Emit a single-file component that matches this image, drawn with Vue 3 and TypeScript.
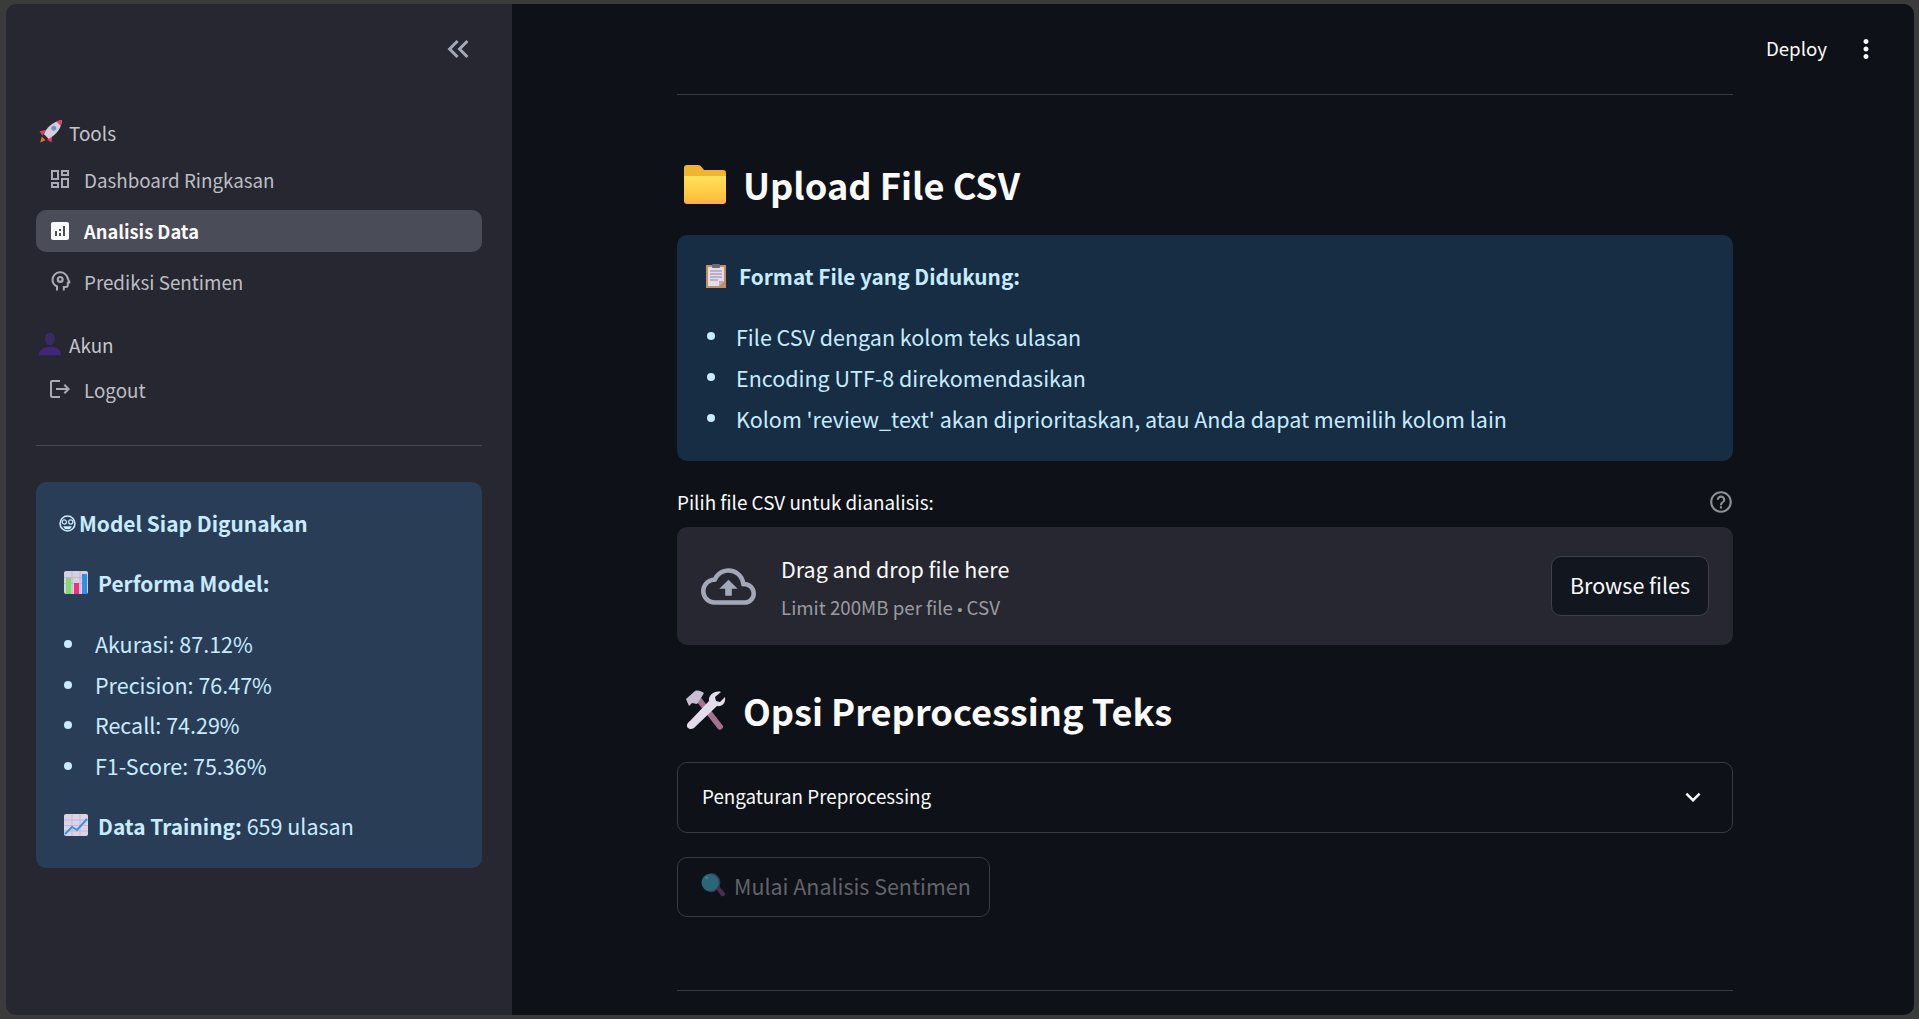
<script setup lang="ts">
const metrics = ['Akurasi: 87.12%', 'Precision: 76.47%', 'Recall: 74.29%', 'F1-Score: 75.36%'];
const formats = [
  'File CSV dengan kolom teks ulasan',
  'Encoding UTF-8 direkomendasikan',
  "Kolom 'review_text' akan diprioritaskan, atau Anda dapat memilih kolom lain",
];
</script>

<template>
  <div class="window">
    <aside class="sidebar">
      <div class="collapse-row">
        <svg class="collapse" viewBox="0 0 24 24"><path d="M17.59 18L19 16.59 14.42 12 19 7.41 17.59 6l-6 6zM11 18l1.41-1.41L7.83 12l4.58-4.59L11 6l-6 6z" /></svg>
      </div>

      <nav class="nav">
        <div class="nav-title">
          <svg class="nav-emoji" viewBox="0 0 32 32">
            <path d="M3 30l2-8 5 5z" fill="#d9772e" />
            <path d="M11 13l-9 2 4 6z M19 21l-1 9-6-4z" fill="#e8386e" />
            <path d="M8 19C11 10 20 2 32 0c-1 12-8 20-18 25z" fill="#d5cfdc" />
            <path d="M24 1.500L32 0l-1.500 8z" fill="#e8386e" />
            <circle cx="21" cy="11" r="3" fill="#4a9be0" stroke="#9a93a5" />
          </svg>
          <span>Tools</span>
        </div>
        <a class="nav-link">
          <svg viewBox="0 0 24 24"><path d="M19 5v2h-4V5h4M9 5v6H5V5h4m10 8v6h-4v-6h4M9 17v2H5v-2h4M21 3h-8v6h8V3zM11 3H3v10h8V3zm10 8h-8v10h8V11zm-10 4H3v6h8v-6z" /></svg>
          <span>Dashboard Ringkasan</span>
        </a>
        <a class="nav-link active">
          <svg viewBox="0 0 24 24"><path d="M19 3H5c-1.100 0-2 .9-2 2v14c0 1.100.9 2 2 2h14c1.100 0 2-.9 2-2V5c0-1.100-.9-2-2-2zM9 17H7v-5h2v5zm4 0h-2v-3h2v3zm0-5h-2v-2h2v2zm4 5h-2V7h2v10z" fill-rule="evenodd" /></svg>
          <span>Analisis Data</span>
        </a>
        <a class="nav-link">
          <svg viewBox="0 0 24 24">
            <path d="M9 21.500v-4C6.300 16.200 4.500 13.800 4.500 10.800a7.700 7.700 0 0 1 15.300-1l1.600 3.200c.2.400 0 .8-.5.8h-1.100v2.200a2 2 0 0 1-2 2h-2v3.500" fill="none" stroke="currentColor" stroke-width="2" />
            <circle cx="12.200" cy="10.400" r="2.400" fill="none" stroke="currentColor" stroke-width="2.200" />
          </svg>
          <span>Prediksi Sentimen</span>
        </a>
        <div class="nav-title second">
          <svg class="nav-emoji" viewBox="0 0 32 32">
            <path d="M16 1c4.500 0 6.500 3.500 6.500 8s-2.500 9-6.500 9-6.500-4.500-6.500-9 2-8 6.500-8z" fill="#3a2b62" />
            <path d="M1 31c0-7 6-10 11-11h8c5 1 11 4 11 11z" fill="#40277c" />
          </svg>
          <span>Akun</span>
        </div>
        <a class="nav-link logout">
          <svg viewBox="0 0 24 24"><path d="M17 7l-1.410 1.410L18.170 11H8v2h10.170l-2.580 2.580L17 17l5-5zM4 5h8V3H4c-1.100 0-2 .9-2 2v14c0 1.100.9 2 2 2h8v-2H4V5z" /></svg>
          <span>Logout</span>
        </a>
      </nav>

      <hr class="side-rule" />

      <section class="model-card">
        <p class="model-title">
          <svg class="tiny-face" viewBox="0 0 16 16">
            <circle cx="8" cy="8" r="7" fill="none" stroke="currentColor" stroke-width="1.500" />
            <circle cx="5" cy="6.500" r="2" fill="none" stroke="currentColor" stroke-width="1.200" />
            <circle cx="11" cy="6.500" r="2" fill="none" stroke="currentColor" stroke-width="1.200" />
            <path d="M4 10.500h8c-.5 2-2 3-4 3s-3.500-1-4-3z" fill="currentColor" />
          </svg>
          <span>Model Siap Digunakan</span>
        </p>
        <p class="model-heading">
          <svg class="emoji" viewBox="0 0 24 24">
            <rect width="24" height="23" rx="2" fill="#d8cfe2" />
            <path d="M0 6.500h24M0 12.500h24M8 0v23M16 0v23" stroke="#b5aec4" stroke-width=".7" />
            <rect x="2" y="7" width="5" height="16" fill="#7ddc6a" />
            <rect x="10" y="12" width="5" height="11" fill="#f0327a" />
            <rect x="18" y="3" width="5" height="20" fill="#2f8fe8" />
          </svg>
          <strong>Performa Model:</strong>
        </p>
        <ul class="bullets model-list">
          <li v-for="m in metrics" :key="m">{{ m }}</li>
        </ul>
        <p class="model-heading training">
          <svg class="emoji" viewBox="0 0 24 24">
            <rect width="24" height="22" rx="2" fill="#ddd2e6" />
            <path d="M0 6h24M0 11.500h24M0 17h24M8 0v22M16 0v22" stroke="#b9b0c8" stroke-width=".7" />
            <path d="M1 20l7-7 5 3 10-11" fill="none" stroke="#3a93e0" stroke-width="2" />
          </svg>
          <strong>Data Training:</strong>&nbsp;659 ulasan
        </p>
      </section>
    </aside>

    <main class="main">
      <div class="toolbar">
        <span class="deploy">Deploy</span>
        <svg class="kebab" viewBox="0 0 24 24"><path d="M12 8c1.100 0 2-.9 2-2s-.9-2-2-2-2 .9-2 2 .9 2 2 2zm0 2c-1.100 0-2 .9-2 2s.9 2 2 2 2-.9 2-2-.9-2-2-2zm0 6c-1.100 0-2 .9-2 2s.9 2 2 2 2-.9 2-2-.9-2-2-2z" /></svg>
      </div>

      <div class="content">
        <hr class="rule first" />

        <h2 class="heading upload">
          <svg class="head-emoji" viewBox="0 0 42 40">
            <path d="M0 4a3 3 0 0 1 3-3h11c2 0 3 1 4.500 3L20 6h19a3 3 0 0 1 3 3v6H0z" fill="#f0b432" />
            <path d="M0 12h42v25a3 3 0 0 1-3 3H3a3 3 0 0 1-3-3z" fill="url(#folderFill)" />
            <defs>
              <linearGradient id="folderFill" x1="0" y1="0" x2="0" y2="1">
                <stop offset="0" stop-color="#ffe05a" />
                <stop offset=".8" stop-color="#ffc33d" />
                <stop offset="1" stop-color="#f9a75e" />
              </linearGradient>
            </defs>
          </svg>
          <span>Upload File CSV</span>
        </h2>

        <section class="info">
          <p class="info-title">
            <svg class="info-emoji" viewBox="0 0 20 24">
              <rect y="1" width="20" height="23" fill="#c68d5f" />
              <path d="M2 3h16v14l-5 5H2z" fill="#e4dcec" />
              <path d="M13 22l5-5h-5z" fill="#b9a9c4" />
              <path d="M4 7h12M4 10h12M4 13h12M4 16h8" stroke="#8d8899" />
              <rect x="6" y="0" width="8" height="4" rx="1" fill="#6d6a78" />
            </svg>
            <strong>Format File yang Didukung:</strong>
          </p>
          <ul class="bullets info-list">
            <li v-for="f in formats" :key="f">{{ f }}</li>
          </ul>
        </section>

        <div class="label-row">
          <label>Pilih file CSV untuk dianalisis:</label>
          <svg class="help" viewBox="0 0 24 24"><path d="M11 18h2v-2h-2v2zm1-16C6.480 2 2 6.480 2 12s4.480 10 10 10 10-4.480 10-10S17.520 2 12 2zm0 18c-4.410 0-8-3.590-8-8s3.590-8 8-8 8 3.590 8 8-3.590 8-8 8zm0-14c-2.210 0-4 1.790-4 4h2c0-1.100.9-2 2-2s2 .9 2 2c0 2-3 1.750-3 5h2c0-2.250 3-2.500 3-5 0-2.210-1.790-4-4-4z" /></svg>
        </div>

        <div class="dropzone">
          <svg class="cloud" viewBox="0 0 24 24"><path d="M19.350 10.040C18.670 6.590 15.640 4 12 4 9.110 4 6.600 5.640 5.350 8.040 2.340 8.360 0 10.910 0 14c0 3.310 2.690 6 6 6h13c2.760 0 5-2.240 5-5 0-2.640-2.050-4.780-4.650-4.960zM19 18H6c-2.210 0-4-1.790-4-4 0-2.050 1.530-3.760 3.560-3.970l1.070-.11.5-.95C8.080 7.140 9.940 6 12 6c2.620 0 4.880 1.860 5.390 4.430l.3 1.500 1.530.11c1.560.1 2.780 1.410 2.780 2.960 0 1.650-1.350 3-3 3zM8 13h2.550v3h2.900v-3H16l-4-4z" /></svg>
          <div class="drop-text">
            <span class="drop-main">Drag and drop file here</span>
            <small class="drop-sub">Limit 200MB per file <span class="dot">•</span> CSV</small>
          </div>
          <button class="browse" type="button">Browse files</button>
        </div>

        <h2 class="heading options">
          <svg class="head-emoji tools" viewBox="0 0 42 40">
            <path d="M10 8l5-3 24 31c1 2-3 5-5 3z" fill="#a8708f" />
            <path d="M2 9l9-8c3-1 6 0 9 2l-3 5-4 6-5-1-3 3z" fill="#c7bdd2" />
            <path d="M37 2l-6 5 1 4 4 1 5-5c1 5-2 10-8 9L12 36c-2 3-6 4-8 2s-1-5 2-7l19-20c-1-6 6-11 12-9z" fill="#e3dcea" />
          </svg>
          <span>Opsi Preprocessing Teks</span>
        </h2>

        <div class="expander">
          <span>Pengaturan Preprocessing</span>
          <svg class="chevron" viewBox="0 0 24 24"><path d="M16.590 8.590L12 13.170 7.410 8.590 6 10l6 6 6-6z" /></svg>
        </div>

        <button class="start" type="button" disabled>
          <svg class="lens" viewBox="0 0 26 26">
            <path d="M15 15l3-2 7 8c1 2-2 4-4 3z" fill="#55325f" />
            <circle cx="10" cy="10" r="9.500" fill="#2e7588" />
            <path d="M10 .5a9.500 9.500 0 0 1 0 19" fill="none" stroke="#3c3a66" stroke-width="1.500" />
            <circle cx="6" cy="5" r="1.500" fill="#4c93a4" />
          </svg>
          <span>Mulai Analisis Sentimen</span>
        </button>

        <hr class="rule last" />
      </div>
    </main>
  </div>
</template>

<style>
html,
body {
  margin: 0;
  background: #3b3b3b;
}
</style>

<style scoped>
.window {
  box-sizing: border-box;
  height: 1019px;
  padding: 4px 5px 4px 6px;
  display: flex;
  font-family: "Noto Sans CJK SC", "Noto Sans", sans-serif;
  color: #fafafa;
  overflow: hidden;
}

.sidebar {
  width: 506px;
  flex: none;
  background: #262730;
  border-radius: 10px 0 0 10px;
  padding: 0 30px;
  box-sizing: border-box;
}

.collapse-row {
  height: 90px;
  display: flex;
  justify-content: flex-end;
  align-items: flex-start;
}

.collapse {
  width: 36px;
  height: 36px;
  margin-top: 27px;
  margin-right: 6px;
  fill: #a3a8b8;
}

.nav {
  display: flex;
  flex-direction: column;
  margin-top: 17px;
}

.nav-title {
  display: flex;
  align-items: center;
  gap: 7px;
  height: 42px;
  margin-bottom: 5px;
  font-size: 18.900px;
  color: #c4c6cc;
  padding-left: 2px;
}

.nav-title.second {
  margin-top: 12px;
}

.nav-emoji {
  width: 24px;
  height: 24px;
  flex: none;
}

.nav-link {
  display: flex;
  align-items: center;
  gap: 12px;
  height: 42px;
  margin-bottom: 9px;
  padding-left: 12px;
  border-radius: 10px;
  font-size: 18.800px;
  color: #bdbfc5;
}

.nav-link svg {
  width: 24px;
  height: 24px;
  flex: none;
  fill: #a9acb6;
  color: #a9acb6;
}

.nav-link.active {
  margin-top: 1px;
  margin-bottom: 8px;
  background: #4a4c58;
  color: #fafafa;
  font-weight: 600;
  font-size: 18.300px;
}

.nav-link.active svg {
  fill: #fafafa;
}

.nav-link.logout {
  margin-bottom: 0;
  margin-top: -2px;
}

.side-rule {
  border: 0;
  border-top: 1px solid #4a4b53;
  margin: 35px 0 36px;
}

.model-card {
  box-sizing: border-box;
  height: 386px;
  background: #2a3d56;
  border-radius: 10px;
  padding: 23px 20px;
  color: #c7ebff;
}

.model-card p,
.info p {
  margin: 0;
}

.model-title {
  display: flex;
  align-items: center;
  gap: 3px;
  height: 36px;
  padding-left: 3px;
  font-size: 20.900px;
  font-weight: 600;
}

.tiny-face {
  width: 17px;
  height: 17px;
  flex: none;
}

.model-heading {
  display: flex;
  align-items: center;
  height: 36px;
  margin-top: 24px !important;
  padding-left: 8px;
  font-size: 21.500px;
}

.model-heading strong {
  font-weight: 600;
  font-size: 20.900px;
}

.model-heading .emoji {
  width: 24px;
  height: 24px;
  margin-right: 10px;
  flex: none;
}

.model-heading.training {
  margin-top: 21px !important;
  font-weight: 400;
}

.bullets {
  margin: 0;
  padding: 0;
  font-size: 21.500px;
  list-style: none;
}

.bullets li {
  position: relative;
}

.bullets li::before {
  content: "";
  position: absolute;
  width: 8px;
  height: 8px;
  border-radius: 50%;
  background: #c7ebff;
}

.model-list {
  margin-top: 23px;
  padding-left: 39px;
}

.model-list li {
  height: 40.700px;
  line-height: 40.700px;
}

.model-list li::before {
  left: -31px;
  top: 16px;
}

.main {
  flex: 1;
  position: relative;
  background: #0e1117;
  border-radius: 0 10px 10px 0;
  padding-left: 165px;
}

.toolbar {
  position: absolute;
  top: 26px;
  right: 33px;
  display: flex;
  align-items: center;
  gap: 24px;
}

.deploy {
  font-size: 18.700px;
  line-height: 36px;
  padding-bottom: 2px;
}

.kebab {
  width: 30px;
  height: 30px;
  fill: #fafafa;
}

.content {
  width: 1056px;
}

.rule {
  border: 0;
  border-top: 1px solid #3a3b41;
  margin: 0;
}

.rule.first {
  margin-top: 90px;
}

.rule.last {
  margin-top: 73px;
}

.heading {
  display: flex;
  align-items: center;
  margin: 0;
  height: 70px;
  font-size: 36.200px;
  font-weight: 600;
  letter-spacing: 0;
}

.upload {
  margin-top: 54px;
}

.head-emoji {
  width: 42px;
  height: 40px;
  flex: none;
  margin: 0 17px 0 7px;
}

.info {
  box-sizing: border-box;
  height: 226px;
  margin-top: 16px;
  padding: 23px 20px;
  background: #172d43;
  border-radius: 10px;
  color: #c7ebff;
}

.info-title {
  display: flex;
  align-items: center;
  height: 36px;
  font-size: 20.800px;
}

.info-title strong {
  font-weight: 600;
}

.info-emoji {
  width: 20px;
  height: 24px;
  margin: 0 13px 0 9px;
  flex: none;
}

.info-list {
  margin-top: 22px;
  padding-left: 39px;
}

.info-list li {
  height: 41px;
  line-height: 41px;
}

.info-list li::before {
  left: -29px;
  top: 16px;
}

.label-row {
  display: flex;
  align-items: center;
  justify-content: space-between;
  height: 32px;
  margin-top: 25px;
  font-size: 18.850px;
}

.label-row label {
  padding-bottom: 2px;
}

.help {
  width: 26px;
  height: 26px;
  margin-right: -1px;
  fill: #8f9094;
}

.dropzone {
  box-sizing: border-box;
  display: flex;
  align-items: center;
  height: 118px;
  margin-top: 9px;
  padding: 0 24px;
  background: #262730;
  border-radius: 10px;
}

.cloud {
  width: 55px;
  height: 55px;
  flex: none;
  fill: #a3a8b8;
}

.drop-text {
  display: flex;
  flex-direction: column;
  flex: 1;
  margin-left: 25px;
  padding-top: 4px;
}

.drop-main {
  font-size: 21.500px;
  line-height: 28px;
}

.drop-sub {
  margin-top: 12px;
  font-size: 18.700px;
  line-height: 24px;
  color: #9a9ba1;
}

.dot {
  font-family: "Liberation Sans", sans-serif;
  font-size: 15px;
}

.browse {
  box-sizing: border-box;
  width: 158px;
  height: 60px;
  padding: 0 0 4px;
  background: #12161e;
  border: 1px solid #3f4148;
  border-radius: 10px;
  color: #fafafa;
  font: inherit;
  font-size: 21.500px;
}

.options {
  margin-top: 30px;
}

.expander {
  box-sizing: border-box;
  display: flex;
  align-items: center;
  justify-content: space-between;
  height: 71px;
  margin-top: 17px;
  padding: 0 24px 4px 24px;
  border: 1px solid #3a3b41;
  border-radius: 10px;
  font-size: 18.800px;
}

.chevron {
  width: 30px;
  height: 30px;
  margin-top: 2px;
  fill: #fafafa;
}

.start {
  box-sizing: border-box;
  display: flex;
  align-items: center;
  width: 313px;
  height: 60px;
  margin-top: 24px;
  padding: 0 0 4px 23px;
  background: transparent;
  border: 1px solid #3a3b41;
  border-radius: 10px;
  color: #62646a;
  font: inherit;
  font-size: 21.450px;
}

.lens {
  width: 25px;
  height: 25px;
  flex: none;
  margin-right: 8px;
  opacity: .85;
}
</style>
